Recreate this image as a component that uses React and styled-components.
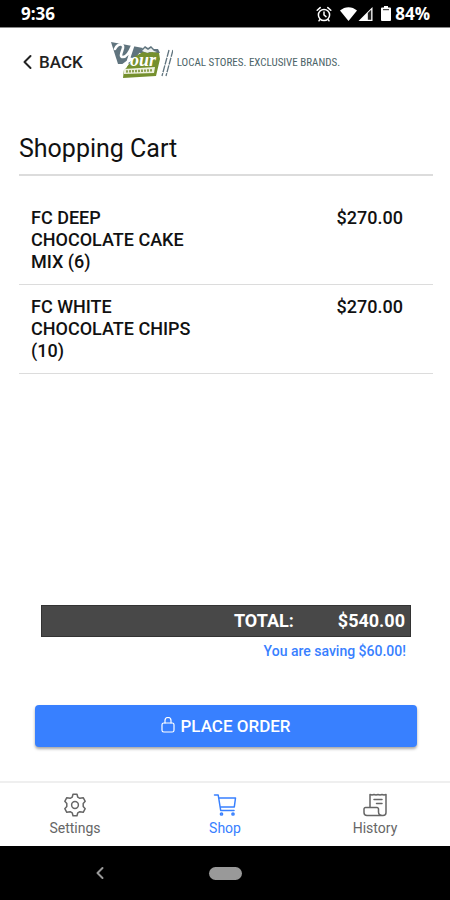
import React from "react";
import styled, { createGlobalStyle } from "styled-components";

const GlobalStyle = createGlobalStyle`
  * { box-sizing: border-box; }
  body {
    margin: 0;
    background: #fff;
    color: #111;
    font-family: Roboto, "Liberation Sans", sans-serif;
  }
  button { font-family: inherit; border: 0; cursor: pointer; }
`;

const Screen = styled.div`
  min-height: 100vh;
  display: flex;
  flex-direction: column;
`;

const StatusBar = styled.div`
  display: flex;
  align-items: center;
  justify-content: space-between;
  height: 28px;
  padding: 0 20px 0 21px;
  background: #000;
  border-bottom: 1px solid #888;
  color: #fff;
  font: 700 17px/27px "Open Sans", sans-serif;
`;

const StatusIcons = styled.div`
  display: flex;
  align-items: center;
  gap: 4px;
`;

const AlarmSlot = styled.span`
  display: flex;
  margin-right: 4px;
`;

const Signals = styled.span`
  display: flex;
  gap: 1px;
  margin-right: 4px;
`;

const Header = styled.header`
  display: flex;
  align-items: center;
  height: 68px;
  padding: 0 20px;
  gap: 26px;
`;

const BackButton = styled.button`
  display: flex;
  align-items: center;
  gap: 5px;
  padding: 0;
  background: none;
  color: #222;
  font-size: 17px;
  font-weight: 500;
  line-height: 24px;
`;

const Brand = styled.div`
  display: flex;
  align-items: center;
  gap: 4px;
  margin-top: -4px;
`;

const Tagline = styled.span`
  color: #4c6468;
  padding-top: 6px;
  font: 400 11px/14px "Roboto Condensed", "Liberation Sans Narrow", Roboto, sans-serif;
  white-space: nowrap;
`;

const Content = styled.main`
  flex: 1;
  display: flex;
  flex-direction: column;
  padding: 36px 17px 34px 19px;
`;

const Title = styled.h1`
  margin: 0;
  padding: 1px 0 9px;
  border-bottom: 2px solid #dcdcdc;
  font-size: 25px;
  font-weight: 400;
  line-height: 32px;
`;

const CartList = styled.ul`
  list-style: none;
  margin: 20px 0 0;
  padding: 0;
`;

const CartItem = styled.li`
  display: flex;
  justify-content: space-between;
  padding: 11px 30px 11px 12px;
  border-bottom: 1px solid #dcdcdc;
  font-size: 18px;
  font-weight: 500;
  line-height: 22px;
`;

const ItemName = styled.span`
  width: 45%;
`;

const Summary = styled.section`
  margin-top: auto;
  padding: 0 22px;
`;

const TotalBar = styled.div`
  display: flex;
  justify-content: flex-end;
  gap: 44px;
  padding: 4px 5px;
  background: #484848;
  border: 1px solid #333;
  color: #fff;
  font-size: 18px;
  font-weight: 700;
  line-height: 22px;
`;

const Saving = styled.p`
  margin: 5px 0 0;
  padding-right: 5px;
  color: #3880ff;
  font-size: 14px;
  font-weight: 500;
  line-height: 18px;
  text-align: right;
`;

const OrderButton = styled.button`
  display: flex;
  align-items: center;
  justify-content: center;
  gap: 5px;
  height: 42px;
  margin: 45px 16px 0;
  border-radius: 4px;
  background: #3880ff;
  box-shadow: 0 2px 3px rgba(0, 0, 0, 0.35);
  color: #fff;
  font-size: 17px;
  font-weight: 500;
`;

const TabBar = styled.nav`
  display: grid;
  grid-template-columns: repeat(3, 1fr);
  height: 65px;
  border-top: 2px solid #efefef;
`;

const Tab = styled.a`
  display: flex;
  flex-direction: column;
  align-items: center;
  gap: 2px;
  padding-top: 10px;
  color: ${(p) => (p.$active ? "#3880ff" : "#666")};
  font-size: 14px;
  line-height: 18px;
  text-decoration: none;
`;

const SystemNav = styled.div`
  display: grid;
  grid-template-columns: repeat(3, 1fr);
  align-items: center;
  justify-items: center;
  height: 54px;
  background: #000;
`;

const SystemBack = styled.button`
  display: flex;
  justify-self: end;
  margin-right: 44px;
  padding: 0;
  background: none;
`;

const HomePill = styled.button`
  width: 33px;
  height: 13px;
  padding: 0;
  border-radius: 7px;
  background: #999;
`;

const Line = ({ w = 24, h = 24, view = "0 0 24 24", sw = 1.5, children, color = "currentColor" }) => (
  <svg width={w} height={h} viewBox={view} fill="none" stroke={color} strokeWidth={sw}
    strokeLinecap="round" strokeLinejoin="round" aria-hidden="true">{children}</svg>
);

const AlarmIcon = () => (
  <Line w={16} h={16} view="0 0 16 16">
    <circle cx="8" cy="9" r="5.6" />
    <path d="M8 6v3l2 1.6M1.2 4.2l3-2.6M14.8 4.2l-3-2.6M4 13.5l-1 1.3M12 13.5l1 1.3" />
  </Line>
);

const WifiIcon = () => (
  <svg width="17" height="14" viewBox="0 0 17 14" fill="#fff" aria-hidden="true">
    <path d="M0 3.5C5-1 12-1 17 3.5L8.5 14Z" />
  </svg>
);

const SignalIcon = () => (
  <svg width="15" height="14" viewBox="0 0 15 15" aria-hidden="true">
    <path d="M0 15 15 0v15Z" fill="#fff" />
    <path d="M10 6.5 13.6 3v10.6H10Z" fill="#222" />
  </svg>
);

const BatteryIcon = () => (
  <svg width="10" height="15" viewBox="0 0 10 15" fill="#fff" aria-hidden="true">
    <path d="M3 0h4v1.5h2a1 1 0 0 1 1 1V14a1 1 0 0 1-1 1H1a1 1 0 0 1-1-1V2.5a1 1 0 0 1 1-1h2Z" />
    <path d="M2 3.7h6" stroke="#222" />
  </svg>
);

const BrandMark = () => (
  <svg width="64" height="36" viewBox="0 0 64 36" role="img" aria-label="Your Northwest">
    <path d="M2 0 34 6 28 14 20 22H9Z" fill="#60747e" />
    <path d="M31 9 36 4l3 2 3-2 3 3 4 0 2 4H30Z" fill="#60747e" />
    <path d="m33 9 3-3 3 2 3-2 3 3 3 1-4 1-3-1-3 1Z" fill="#eef2ef" />
    <path d="M25 15 34 10l5 1 4-1 7 1 1 6-4 17-33 2 1-9 6-6Z" fill="#75902e" />
    <path d="M6 7c3-6 9-6 8-1-1 4-4 9 0 9 4 0 7-6 9-11M24 4 18 22c-2 5-6 7-6 4 0-3 6-5 10-9" fill="none" stroke="#fff" strokeWidth="2.6" strokeLinecap="round" />
    <text x="21" y="24" fill="#fff" fontFamily="Liberation Serif, serif" fontSize="18" fontWeight="700" fontStyle="italic">our</text>
    <path d="M15 27 46 25l-1 6-30 1Z" fill="#eef1df" />
    <path d="M17 29.5 43 28.3" stroke="#8da052" strokeWidth="2.4" strokeDasharray="2 1" />
    <path d="M60 8 53 34M64 8 57 34" fill="none" stroke="#60747e" strokeWidth="1.3" strokeDasharray="7 1" />
  </svg>
);

const GearIcon = () => (
  <Line>
    <circle cx="12" cy="12" r="3.4" />
    <path d="M10 1.2h4l.8 3 2 1.1 3.4-.6 2 3.6-2 2.2v3l2 2.2-2 3.6-3.400-.6-2 1.100-.8 3h-4l-.8-3-2-1.100-3.400.6-2-3.600 2-2.200v-3l-2-2.200 2-3.600 3.400.6 2-1.100Z" />
  </Line>
);

const CartIcon = () => (
  <Line>
    <path d="M1.500 2h3.700l2.500 15.500H21M5.700 5h16.800l-1.200 9H7.200" />
    <circle cx="8.500" cy="21" r="1.100" />
    <circle cx="20" cy="21" r="1.100" />
  </Line>
);

const ReceiptIcon = () => (
  <Line>
    <path d="M7 14.500V1.500l2 .4 2-.4 2 .4 2-.4 2 .4 2-.4 2 .4 2-.4V19.500a3 3 0 0 1-3 3H4a3 3 0 0 1-3-3V16a1.500 1.500 0 0 1 1.500-1.500H14a1.500 1.500 0 0 1 1.500 1.500v3c0 2.200 1.500 3.500 4 3.500" />
    <path d="M11 6.500h8M13.500 10.500H19" />
  </Line>
);

const LockIcon = () => (
  <Line w={14} h={18} view="0 0 14 18" sw={1.2}>
    <rect x="1" y="6" width="12" height="9" rx="1.8" />
    <path d="M4 6V3.500a3 3 0 0 1 6 0V6" />
  </Line>
);

const items = [
  { name: "FC DEEP CHOCOLATE CAKE MIX (6)", price: "$270.00" },
  { name: "FC WHITE CHOCOLATE CHIPS (10)", price: "$270.00" },
];

const tabs = [
  { label: "Settings", Icon: GearIcon },
  { label: "Shop", Icon: CartIcon, active: true },
  { label: "History", Icon: ReceiptIcon },
];

export default function App() {
  return (
    <Screen>
      <GlobalStyle />
      <StatusBar>
        <span>9:36</span>
        <StatusIcons>
          <AlarmSlot><AlarmIcon /></AlarmSlot>
          <Signals>
            <WifiIcon />
            <SignalIcon />
          </Signals>
          <BatteryIcon />
          <span>84%</span>
        </StatusIcons>
      </StatusBar>
      <Header>
        <BackButton type="button">
          <Line w={14} h={18} view="0 0 14 18" sw={2}><path d="M10.500 3 4.500 9l6 6" /></Line>
          BACK
        </BackButton>
        <Brand>
          <BrandMark />
          <Tagline>LOCAL STORES. EXCLUSIVE BRANDS.</Tagline>
        </Brand>
      </Header>
      <Content>
        <Title>Shopping Cart</Title>
        <CartList>
          {items.map((item) => (
            <CartItem key={item.name}>
              <ItemName>{item.name}</ItemName>
              <span>{item.price}</span>
            </CartItem>
          ))}
        </CartList>
        <Summary>
          <TotalBar>
            <span>TOTAL:</span>
            <span>$540.00</span>
          </TotalBar>
          <Saving>You are saving $60.00!</Saving>
        </Summary>
        <OrderButton type="button"><LockIcon />PLACE ORDER</OrderButton>
      </Content>
      <TabBar>
        {tabs.map(({ label, Icon, active }) => (
          <Tab key={label} href={`#${label.toLowerCase()}`} $active={active} aria-current={active ? "page" : undefined}>
            <Icon />
            {label}
          </Tab>
        ))}
      </TabBar>
      <SystemNav>
        <SystemBack type="button" aria-label="Back">
          <Line w={12} h={14} view="0 0 12 14" sw={2} color="#999"><path d="M8.500 2 3.500 7l5 5" /></Line>
        </SystemBack>
        <HomePill type="button" aria-label="Home" />
      </SystemNav>
    </Screen>
  );
}
